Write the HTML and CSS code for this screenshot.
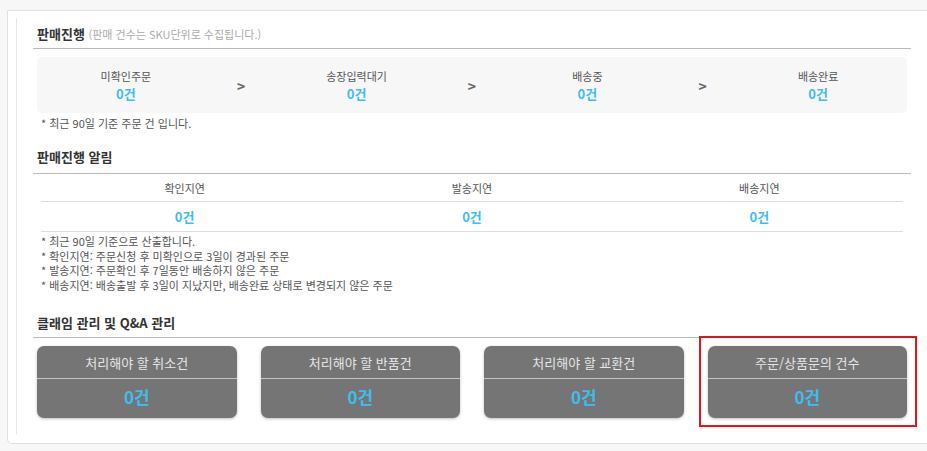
FILE: index.html
```html
<!DOCTYPE html>
<html lang="ko">
<head>
<meta charset="UTF-8">
<title>판매진행 현황</title>
<link rel="stylesheet" href="styles.css">
</head>
<body>

<div class="panel">
  <div class="inner">

    <div class="sec-title">판매진행 <span class="sub">(판매 건수는 SKU단위로 수집됩니다.)</span></div>
    <div class="flow">
      <div class="step"><div class="label">미확인주문</div><div class="num">0건</div></div>
      <div class="arrow">&gt;</div>
      <div class="step"><div class="label">송장입력대기</div><div class="num">0건</div></div>
      <div class="arrow">&gt;</div>
      <div class="step"><div class="label">배송중</div><div class="num">0건</div></div>
      <div class="arrow">&gt;</div>
      <div class="step"><div class="label">배송완료</div><div class="num">0건</div></div>
    </div>
    <p class="note">* 최근 90일 기준 주문 건 입니다.</p>

    <div class="sec-title mt">판매진행 알림</div>
    <table class="alarm">
      <tr>
        <th>확인지연</th>
        <th>발송지연</th>
        <th>배송지연</th>
      </tr>
      <tr>
        <td>0건</td>
        <td>0건</td>
        <td>0건</td>
      </tr>
    </table>
    <ul class="notes">
      <li>* 최근 90일 기준으로 산출합니다.</li>
      <li>* 확인지연: 주문신청 후 미확인으로 3일이 경과된 주문</li>
      <li>* 발송지연: 주문확인 후 7일동안 배송하지 않은 주문</li>
      <li>* 배송지연: 배송출발 후 3일이 지났지만, 배송완료 상태로 변경되지 않은 주문</li>
    </ul>

    <div class="sec-title mt2">클래임 관리 및 Q&amp;A 관리</div>
    <div class="cards">
      <div class="card"><div class="card-title">처리해야 할 취소건</div><div class="card-num">0건</div></div>
      <div class="card"><div class="card-title">처리해야 할 반품건</div><div class="card-num">0건</div></div>
      <div class="card"><div class="card-title">처리해야 할 교환건</div><div class="card-num">0건</div></div>
      <div class="card marked"><div class="card-title">주문/상품문의 건수</div><div class="card-num">0건</div></div>
    </div>

  </div>
</div>

</body>
</html>
```

FILE: styles.css
```css
html, body {
  overflow: hidden;
}
body {
  margin: 0;
  background: #f7f7f8;
  font-family: "Noto Sans CJK KR", "Noto Sans", sans-serif;
  color: #555;
}
.panel {
  margin: 10px -12px 0 7px;
  background: #fff;
  border: 1px solid #e0e0e0;
  border-radius: 0 0 0 5px;
}
.inner {
  margin: 7px 0 9px 8px;
  border-left: 1px solid #e8e8e8;
  padding: 0 0 16px 16px;
  width: 878px;
}
.sec-title {
  font-size: 13px;
  font-weight: bold;
  color: #333;
  line-height: 20px;
  padding: 6px 0 4px 4px;
  border-bottom: 1px solid #bbb;
}
.sec-title .sub {
  font-size: 11px;
  font-weight: normal;
  color: #aaa;
}
.sec-title.mt {
  margin-top: 16px;
  padding-top: 0;
  padding-bottom: 6px;
}
.sec-title.mt2 {
  margin-top: 21px;
  padding-top: 0;
}
.flow {
  display: flex;
  margin: 8px 4px 0;
  height: 56px;
  background: #f7f7f7;
  border-radius: 5px;
}
.step {
  flex: 1;
  text-align: center;
  padding-top: 11px;
}
.step .label {
  font-size: 11px;
  line-height: 16px;
}
.step .num {
  font-size: 13px;
  font-weight: bold;
  line-height: 20px;
  color: #3fbdee;
}
.arrow {
  width: 53px;
  text-align: center;
  font-size: 14px;
  font-weight: bold;
  color: #666;
  line-height: 58px;
}
.note {
  margin: 2px 0 0;
  padding-left: 8px;
  font-size: 11px;
  line-height: 16px;
}
.alarm {
  width: 862px;
  margin: 0 8px;
  border-collapse: collapse;
  table-layout: fixed;
}
.alarm th {
  font-size: 11px;
  font-weight: normal;
  height: 27px;
  padding: 0;
  border-bottom: 1px solid #ddd;
}
.alarm td {
  font-size: 13px;
  font-weight: bold;
  color: #3fbdee;
  text-align: center;
  height: 29px;
  padding: 0;
  border-bottom: 1px solid #ddd;
}
.notes {
  list-style: none;
  margin: 2px 0 0;
  padding-left: 8px;
  font-size: 11px;
  line-height: 14.5px;
}
.cards {
  display: grid;
  grid-template-columns: repeat(4, 1fr);
  gap: 24px;
  margin: 8px 4px 0;
}
.card {
  position: relative;
  background: #757575;
  border-radius: 7px;
  box-shadow: 0 1px 3px rgba(0, 0, 0, 0.25);
  height: 72px;
  text-align: center;
}
.card-title {
  font-size: 13px;
  line-height: 20px;
  color: #e6e6e6;
  padding: 7px 0 5px;
  border-bottom: 1px solid #c4c4c4;
}
.card-num {
  font-size: 17px;
  font-weight: bold;
  color: #3fbdee;
  line-height: 24px;
  padding-top: 6px;
}
.marked::after {
  content: "";
  position: absolute;
  left: -9px;
  right: -10px;
  top: -10px;
  bottom: -9px;
  border: 2px solid #e3141c;
}
```
